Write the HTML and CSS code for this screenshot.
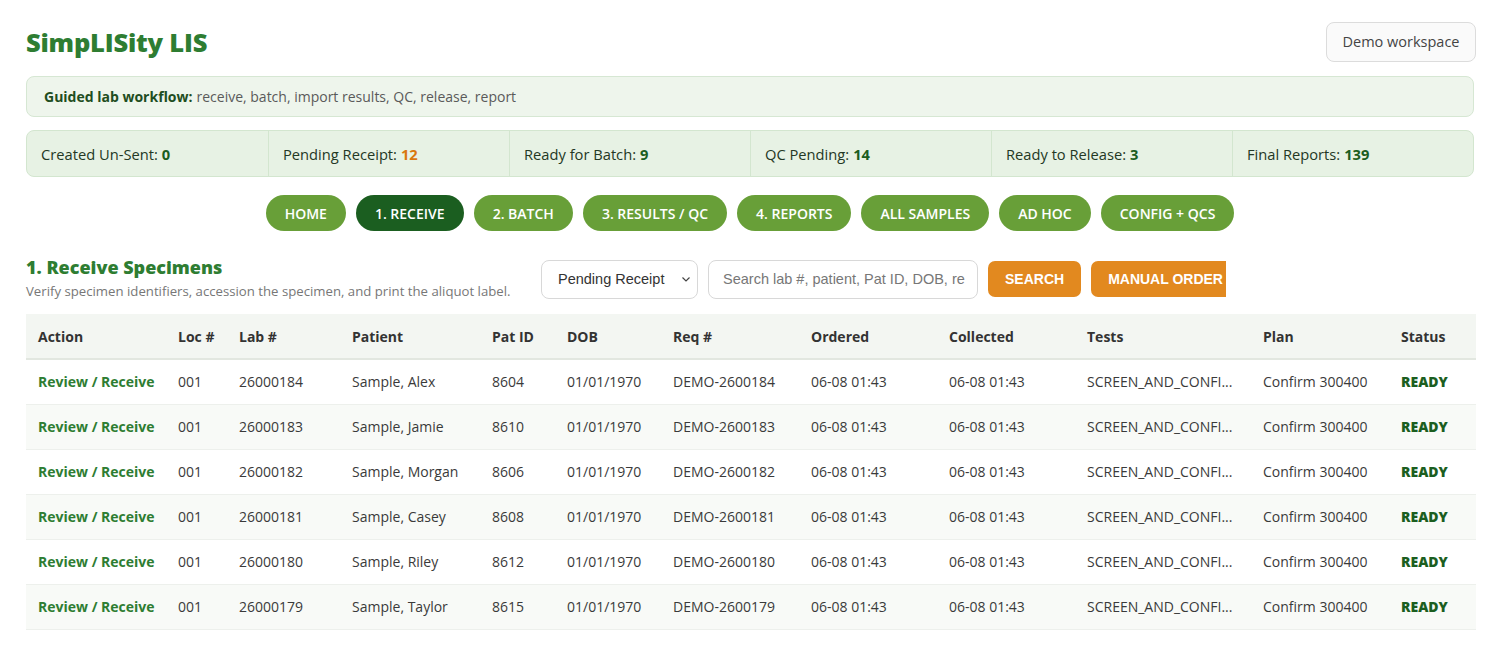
FILE: index.html
```html
<!DOCTYPE html>
<html>
<head>
<meta charset="utf-8">
<title>SimpLISity LIS</title>
<link rel="stylesheet" href="styles.css">
</head>
<body>
<div class="page">
  <header class="topbar">
    <h1 class="brand">SimpLISity LIS</h1>
    <button class="workspace">Demo workspace</button>
  </header>

  <div class="banner"><strong>Guided lab workflow:</strong> receive, batch, import results, QC, release, report</div>

  <div class="stats">
    <div class="stat">Created Un-Sent: <b>0</b></div>
    <div class="stat">Pending Receipt: <b class="warn">12</b></div>
    <div class="stat">Ready for Batch: <b>9</b></div>
    <div class="stat">QC Pending: <b>14</b></div>
    <div class="stat">Ready to Release: <b>3</b></div>
    <div class="stat">Final Reports: <b>139</b></div>
  </div>

  <nav class="tabs">
    <span class="pill">HOME</span>
    <span class="pill active">1. RECEIVE</span>
    <span class="pill">2. BATCH</span>
    <span class="pill">3. RESULTS / QC</span>
    <span class="pill">4. REPORTS</span>
    <span class="pill">ALL SAMPLES</span>
    <span class="pill">AD HOC</span>
    <span class="pill">CONFIG + QCS</span>
  </nav>

  <section class="section">
    <div class="section-head">
      <div class="section-title">
        <h2>1. Receive Specimens</h2>
        <p>Verify specimen identifiers, accession the specimen, and print the aliquot label.</p>
      </div>
      <div class="controls">
        <div class="select">Pending Receipt
          <svg width="10" height="10" viewBox="0 0 10 10"><path d="M1.5 3.5 L5 7 L8.5 3.5" fill="none" stroke="#444" stroke-width="1.2"/></svg>
        </div>
        <div class="search">Search lab #, patient, Pat ID, DOB, re</div>
        <button class="btn">SEARCH</button>
        <button class="btn">MANUAL ORDER</button>
      </div>
    </div>

    <table class="grid">
      <colgroup>
        <col style="width:140px"><col style="width:61px"><col style="width:113px"><col style="width:140px">
        <col style="width:75px"><col style="width:106px"><col style="width:138px"><col style="width:138px">
        <col style="width:138px"><col style="width:176px"><col style="width:138px"><col style="width:87px">
      </colgroup>
      <thead>
        <tr><th>Action</th><th>Loc #</th><th>Lab #</th><th>Patient</th><th>Pat ID</th><th>DOB</th><th>Req #</th><th>Ordered</th><th>Collected</th><th>Tests</th><th>Plan</th><th>Status</th></tr>
      </thead>
      <tbody>
        <tr><td class="act">Review / Receive</td><td>001</td><td>26000184</td><td>Sample, Alex</td><td>8604</td><td>01/01/1970</td><td>DEMO-2600184</td><td>06-08 01:43</td><td>06-08 01:43</td><td>SCREEN_AND_CONFI...</td><td>Confirm 300400</td><td class="st">READY</td></tr>
        <tr><td class="act">Review / Receive</td><td>001</td><td>26000183</td><td>Sample, Jamie</td><td>8610</td><td>01/01/1970</td><td>DEMO-2600183</td><td>06-08 01:43</td><td>06-08 01:43</td><td>SCREEN_AND_CONFI...</td><td>Confirm 300400</td><td class="st">READY</td></tr>
        <tr><td class="act">Review / Receive</td><td>001</td><td>26000182</td><td>Sample, Morgan</td><td>8606</td><td>01/01/1970</td><td>DEMO-2600182</td><td>06-08 01:43</td><td>06-08 01:43</td><td>SCREEN_AND_CONFI...</td><td>Confirm 300400</td><td class="st">READY</td></tr>
        <tr><td class="act">Review / Receive</td><td>001</td><td>26000181</td><td>Sample, Casey</td><td>8608</td><td>01/01/1970</td><td>DEMO-2600181</td><td>06-08 01:43</td><td>06-08 01:43</td><td>SCREEN_AND_CONFI...</td><td>Confirm 300400</td><td class="st">READY</td></tr>
        <tr><td class="act">Review / Receive</td><td>001</td><td>26000180</td><td>Sample, Riley</td><td>8612</td><td>01/01/1970</td><td>DEMO-2600180</td><td>06-08 01:43</td><td>06-08 01:43</td><td>SCREEN_AND_CONFI...</td><td>Confirm 300400</td><td class="st">READY</td></tr>
        <tr><td class="act">Review / Receive</td><td>001</td><td>26000179</td><td>Sample, Taylor</td><td>8615</td><td>01/01/1970</td><td>DEMO-2600179</td><td>06-08 01:43</td><td>06-08 01:43</td><td>SCREEN_AND_CONFI...</td><td>Confirm 300400</td><td class="st">READY</td></tr>
      </tbody>
    </table>
  </section>
</div>
</body>
</html>
```
FILE: styles.css
```css
* { box-sizing: border-box; }
html, body { margin: 0; padding: 0; background: #fff; }
body {
  font-family: "Open Sans", "Noto Sans", sans-serif;
  font-size: 14px;
  color: #333;
}
.page { padding: 21px 26px 0 26px; }

.topbar {
  display: flex;
  justify-content: space-between;
  align-items: center;
  height: 41px;
}
.brand {
  margin: 0;
  font-size: 25.5px;
  font-weight: 800;
  color: #2e7d32;
  letter-spacing: -0.2px;
}
.workspace {
  font-family: "Open Sans", sans-serif;
  font-size: 14.5px;
  color: #444;
  background: #fafafa;
  border: 1px solid #dcdcdc;
  border-radius: 8px;
  height: 40px;
  width: 150px;
  margin-right: -2px;
  padding: 0;
}

.banner {
  margin-top: 14px;
  height: 41px;
  display: flex;
  align-items: center;
  padding: 0 17px;
  background: #eef5ec;
  border: 1px solid #d6e7d3;
  border-radius: 8px;
  color: #5a5a5a;
}
.banner strong { color: #1e4d21; font-weight: 700; margin-right: 4px; }

.stats {
  margin-top: 13px;
  display: grid;
  grid-template-columns: repeat(6, 1fr);
  height: 47px;
  background: #e7f2e4;
  border: 1px solid #d3e6cf;
  border-radius: 8px;
  overflow: hidden;
}
.stat {
  display: flex;
  align-items: center;
  padding: 0 14px;
  font-size: 14.7px;
  color: #243824;
  border-left: 1px solid #d3e6cf;
}
.stat:first-child { border-left: none; }
.stat b { color: #1b5e20; font-weight: 700; margin-left: 4px; }
.stat b.warn { color: #d9770f; }

.tabs {
  margin-top: 18px;
  display: flex;
  justify-content: center;
  gap: 10px;
}
.pill {
  height: 36px;
  display: flex;
  align-items: center;
  padding: 0 19px;
  border-radius: 18px;
  background: #689f38;
  color: #fff;
  font-weight: 600;
  font-size: 14px;
}
.pill.active { background: #1b5e20; }

.section { margin-top: 24px; }
.section-head {
  display: flex;
  align-items: flex-start;
  gap: 30px;
}
.section-title { flex: 0 0 485px; }
.section-title h2 {
  margin: 0;
  font-size: 18px;
  font-weight: 800;
  color: #2e7d32;
  line-height: 24px;
}
.section-title p {
  margin: 3px 0 0 0;
  font-size: 13.2px;
  color: #777;
  white-space: nowrap;
}
.controls {
  display: flex;
  gap: 10px;
  align-items: center;
  width: 685px;
  overflow: hidden;
  margin-top: 4px;
  height: 40px;
}
.select {
  flex: none;
  width: 157px;
  height: 39px;
  border: 1px solid #d8d8d8;
  border-radius: 8px;
  display: flex;
  align-items: center;
  justify-content: space-between;
  padding: 0 6px 0 16px;
  font-family: "Liberation Sans", Arial, sans-serif;
  font-size: 14.5px;
  color: #333;
  background: #fff;
}
.search {
  flex: none;
  width: 270px;
  height: 39px;
  border: 1px solid #d8d8d8;
  border-radius: 8px;
  display: flex;
  align-items: center;
  padding: 0 14px;
  font-family: "Liberation Sans", Arial, sans-serif;
  font-size: 14.5px;
  color: #777;
  white-space: nowrap;
  overflow: hidden;
}
.btn {
  flex: none;
  height: 36px;
  border: none;
  border-radius: 7px;
  background: #e2891f;
  color: #fff;
  font-family: "Liberation Sans", Arial, sans-serif;
  font-weight: 700;
  font-size: 14px;
  padding: 0 17px;
}

.grid {
  margin-top: 14px;
  width: 1450px;
  border-collapse: collapse;
  table-layout: fixed;
}
.grid th {
  text-align: left;
  font-weight: 700;
  color: #333;
  background: #f3f6f2;
  height: 45px;
  padding: 0 12px;
  border-bottom: 2px solid #e2e7e0;
}
.grid td {
  height: 45px;
  padding: 0 12px;
  color: #3a3a3a;
  border-bottom: 1px solid #edf0ec;
  white-space: nowrap;
  overflow: hidden;
}
.grid tbody tr:nth-child(even) td { background: #f8faf7; }
.grid td.act { color: #2e7d32; font-weight: 700; }
.grid td.st { color: #1b5e20; font-weight: 800; }
```
